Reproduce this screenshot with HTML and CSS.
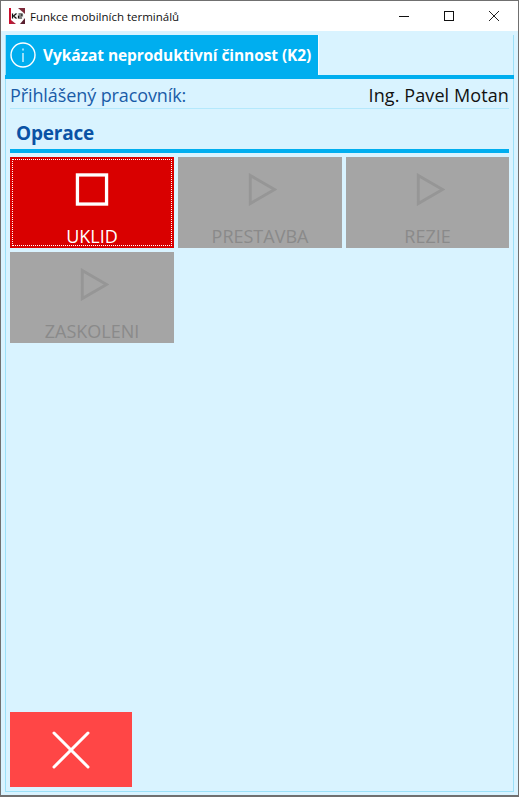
FILE: index.html
```html
<!DOCTYPE html>
<html lang="cs">
<head>
<meta charset="utf-8">
<title>Funkce mobilních terminálů</title>
<link rel="stylesheet" href="styles.css">
</head>
<body>
<div class="window">
  <header class="titlebar">
    <svg class="app-icon" width="16" height="16" viewBox="0 0 16 16">
      <rect x="0" y="0" width="16" height="16" fill="#fff"/>
      <rect x="0" y="0" width="2" height="16" fill="#c8102e"/>
      <path d="M9 0H16V6Z" fill="#7d2a3a"/>
      <path d="M2 16V12L7 16Z" fill="#b0203a"/>
      <path d="M11 16L16 10V16Z" fill="#5a2030"/>
      <rect x="3" y="5" width="12" height="6" fill="#f4f4f4"/>
      <path d="M3.5 5.5V10.5M7.5 5.5L4.5 8L7.5 10.5M9.5 6H13V8H9.5V10H13" fill="none" stroke="#111" stroke-width="1.2"/>
    </svg>
    <span class="title">Funkce mobilních terminálů</span>
    <div class="winctl">
      <svg width="12" height="12" viewBox="0 0 12 12"><path d="M1 6.5H11" stroke="#111" stroke-width="1"/></svg>
      <svg width="12" height="12" viewBox="0 0 12 12"><rect x="1.5" y="1.5" width="9" height="9" fill="none" stroke="#111" stroke-width="1"/></svg>
      <svg width="12" height="12" viewBox="0 0 12 12"><path d="M1 1L11 11M11 1L1 11" stroke="#222" stroke-width="1"/></svg>
    </div>
  </header>
  <main class="client">
    <div class="frame">
      <div class="tabrow">
        <div class="tab">
          <svg width="26" height="26" viewBox="0 0 26 26"><circle cx="13" cy="13" r="12" fill="none" stroke="#fff" stroke-width="1.4"/><path d="M13 11V20M13 6.5V8.5" stroke="#fff" stroke-width="1.2"/></svg>
          <span>Vykázat neproduktivní činnost (K2)</span>
        </div>
      </div>
      <div class="body">
        <div class="info"><span class="label">Přihlášený pracovník:</span><span class="value">Ing. Pavel Motan</span></div>
        <h2 class="section">Operace</h2>
        <div class="ops">
          <button class="op active">
            <svg width="34" height="34" viewBox="0 0 34 34"><rect x="2" y="2" width="30" height="30" fill="none" stroke="#fff" stroke-width="3.4"/></svg>
            <span>UKLID</span>
          </button>
          <button class="op">
            <svg width="34" height="34" viewBox="0 0 34 34"><path d="M7 2.5L32 17L7 31.5Z" fill="none" stroke="#969696" stroke-width="3"/></svg>
            <span>PRESTAVBA</span>
          </button>
          <button class="op">
            <svg width="34" height="34" viewBox="0 0 34 34"><path d="M7 2.5L32 17L7 31.5Z" fill="none" stroke="#969696" stroke-width="3"/></svg>
            <span>REZIE</span>
          </button>
          <button class="op">
            <svg width="34" height="34" viewBox="0 0 34 34"><path d="M7 2.5L32 17L7 31.5Z" fill="none" stroke="#969696" stroke-width="3"/></svg>
            <span>ZASKOLENI</span>
          </button>
        </div>
        <button class="close">
          <svg width="38" height="38" viewBox="0 0 38 38"><path d="M2 2L36 36M36 2L2 36" stroke="#fff" stroke-width="3" stroke-linecap="round"/></svg>
        </button>
      </div>
    </div>
  </main>
</div>
</body>
</html>
```
FILE: styles.css
```css
* { box-sizing: border-box; }
html, body { margin: 0; height: 100%; }
body { font-family: "Open Sans", "Noto Sans", sans-serif; background: #d9f3ff; overflow: hidden; }
.window { width: 519px; height: 797px; display: flex; flex-direction: column; border: 1px solid #707070; border-bottom-width: 2px; background: #d9f3ff; }
.titlebar { height: 30px; flex: none; background: #fff; display: flex; align-items: center; padding-left: 8px; }
.app-icon { flex: none; }
.title { font-size: 11.5px; color: #111; margin-left: 5px; }
.winctl { margin-left: auto; display: flex; gap: 33px; padding-right: 18px; align-items: center; }
.winctl svg { display: block; }
.client { flex: 1; padding: 4px 4px 3px 4px; min-height: 0; display: flex; }
.frame { flex: 1; display: flex; flex-direction: column; border: 1px solid #9be0f8; border-top: none; }
.tabrow { height: 44px; flex: none; border-bottom: 4px solid #00aeef; margin: 0 -1px 0 -1px; padding-left: 1px; display: flex; }
.tab { width: 313px; height: 40px; background: #00aeef; border-right: 1px solid #f2fbff; display: flex; align-items: center; gap: 7px; padding-left: 4px; color: #fff; font-weight: 700; font-size: 15.5px; letter-spacing: -0.08px; }
.tab svg { flex: none; }
.body { flex: 1; padding: 0 4px 4px 4px; display: flex; flex-direction: column; min-height: 0; }
.info { height: 30px; flex: none; display: flex; justify-content: space-between; align-items: flex-end; border-bottom: 1px solid #b4e8fc; font-size: 18px; line-height: 26px; }
.label { color: #1a5ca8; letter-spacing: -0.1px; }
.value { color: #111; letter-spacing: 0.1px; }
.section { margin: 0; height: 44px; flex: none; border-bottom: 4px solid #00aeef; color: #0a52a5; font-size: 19px; font-weight: 700; line-height: 48px; padding-left: 6px; letter-spacing: -0.2px; }
.ops { display: grid; grid-template-columns: 164px 164px 163px; grid-auto-rows: 91px; gap: 4px; margin-top: 4px; }
.op { border: none; margin: 0; padding: 0; background: #a5a5a5; color: #8a8a8a; font-family: inherit; font-size: 18px; display: flex; flex-direction: column; align-items: center; justify-content: flex-start; padding-top: 16px; line-height: 24px; }
.op span { margin-top: 18px; }
.op svg { display: block; }
.active { background: #d90000; color: #fff; outline: 1px dotted #fff; outline-offset: -3px; }
.close { margin-top: auto; width: 122px; height: 75px; border: none; padding: 0; background: #ff4646; display: flex; align-items: center; justify-content: center; flex: none; }
.close svg { display: block; }
```
